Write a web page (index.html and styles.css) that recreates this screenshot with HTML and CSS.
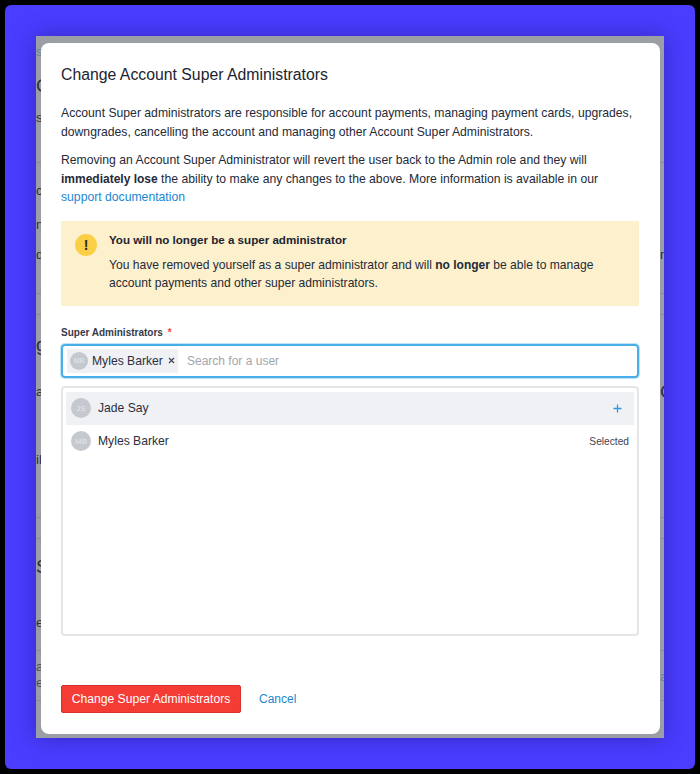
FILE: index.html
```html
<!DOCTYPE html>
<html lang="en">
<head>
<meta charset="utf-8">
<title>Change Account Super Administrators</title>
<link rel="stylesheet" href="styles.css">
</head>
<body>
<div class="frame">
  <div class="stage">
    <div class="backdrop" aria-hidden="true">
      <div></div>
      <div class="row link"><span>s</span></div>
      <div></div>
      <div class="row big"><span>C</span></div>
      <div></div>
      <div class="row"><span>s</span></div>
      <div class="line"></div>
      <div></div>
      <div class="row"><span>c</span></div>
      <div></div>
      <div class="row"><span>n</span></div>
      <div></div>
      <div class="row"><span>d</span><span>ng</span></div>
      <div class="line"></div>
      <div class="line"></div>
      <div></div>
      <div class="row big"><span>g</span></div>
      <div></div>
      <div class="row"><span>a</span><span class="big">C</span></div>
      <div></div>
      <div class="row"><span>il</span></div>
      <div class="line"></div>
      <div class="line"></div>
      <div></div>
      <div class="row big"><span>S</span></div>
      <div></div>
      <div class="row"><span>e</span></div>
      <div class="line"></div>
      <div></div>
      <div class="row double"><span>a<br>er</span><span class="link far">ar</span></div>
      <div class="line"></div>
    </div>

    <main class="modal">
      <h1 class="title">Change Account Super Administrators</h1>
      <p class="copy first">Account Super administrators are responsible for account payments, managing payment cards, upgrades, downgrades, cancelling the account and managing other Account Super Administrators.</p>
      <p class="copy second">Removing an Account Super Administrator will revert the user back to the Admin role and they will <strong>immediately lose</strong> the ability to make any changes to the above. More information is available in our <a class="anchor" href="#">support documentation</a></p>

      <section class="alert">
        <div class="alert-icon">!</div>
        <div class="alert-body">
          <h2 class="alert-title">You will no longer be a super administrator</h2>
          <p class="alert-text">You have removed yourself as a super administrator and will <strong>no longer</strong> be able to manage account payments and other super administrators.</p>
        </div>
      </section>

      <label class="label">Super Administrators <span class="req">*</span></label>
      <div class="input">
        <span class="chip">
          <span class="avatar small">MB</span>
          <span class="chip-name">Myles Barker</span>
          <svg class="chip-x" width="7" height="7" viewBox="0 0 7 7"><path d="M1 1l5 5M6 1L1 6" stroke="#3a3f4b" stroke-width="1.1" fill="none"/></svg>
        </span>
        <span class="placeholder">Search for a user</span>
      </div>

      <div class="list">
        <div class="option active">
          <span class="avatar">JS</span>
          <span class="option-name">Jade Say</span>
          <svg class="plus" width="9" height="9" viewBox="0 0 9 9"><path d="M4.5 0.5v8M0.5 4.5h8" stroke="#2f97dc" stroke-width="1.3" fill="none"/></svg>
        </div>
        <div class="option">
          <span class="avatar">MB</span>
          <span class="option-name">Myles Barker</span>
          <span class="selected">Selected</span>
        </div>
      </div>

      <div class="actions">
        <button class="danger" type="button">Change Super Administrators</button>
        <a class="anchor cancel" href="#">Cancel</a>
      </div>
    </main>
  </div>
</div>
</body>
</html>
```

FILE: styles.css
```css
* { box-sizing: border-box; }
html, body { margin: 0; height: 774px; background: #000; overflow: hidden; }
body { font-family: "Liberation Sans", Arial, sans-serif; color: #1f2533; }

.frame {
  height: 764px;
  margin: 5px;
  padding: 31px 31px 31px;
  background: #4a3dff;
  border-radius: 6px;
}

.stage {
  position: relative;
  height: 702px;
  padding: 7px 4px 4px 5px;
  background: #9c9ea6;
  box-shadow: 0 0 22px rgba(25, 15, 110, 0.42);
  overflow: hidden;
}

/* page dimmed behind the dialog, only its edges show */
.backdrop {
  position: absolute;
  inset: 0;
  display: grid;
  grid-template-rows: 8px 16px 18px 20px 12px 16px 37px 20px 16px 18px 16px 14px 16px 31px 21px 22px 16px 31px 16px 52px 16px 50px 21px 20px 16px 40px 16px 20px 8px 32px 10px;
  color: #2c303b;
  font-size: 13px;
}
.row {
  display: grid;
  grid-template-columns: 624px 1fr;
  line-height: 16px;
  white-space: nowrap;
}
.row.big, .big { font-size: 19px; }
.row.link, .link { color: #5d86a3; }
.double { color: #4c505b; }
.far { padding-top: 10px; }
.line { border-bottom: 1px solid #8d8f97; }

.modal {
  position: relative;
  height: 691px;
  padding: 22px 21px 0 20px;
  background: #fff;
  border-radius: 8px;
}

.title {
  margin: 0;
  font-size: 15.8px;
  line-height: 19px;
  font-weight: 400;
  color: #1c2331;
}

.copy {
  margin: 0;
  font-size: 12.2px;
  line-height: 18.5px;
  color: #242a38;
}
.first { margin-top: 20px; }
.second { margin-top: 10px; }
strong { font-weight: 700; font-size: 12px; }
.anchor { color: #1a87d0; text-decoration: none; }

.alert {
  display: flex;
  gap: 12px;
  height: 85px;
  margin-top: 14px;
  padding: 12px 14px;
  background: #fdf0cd;
}
.alert-icon {
  flex: none;
  width: 22px;
  height: 22px;
  margin-top: 1px;
  border-radius: 50%;
  background: #fbcf45;
  color: #2a2a2a;
  font-size: 14px;
  font-weight: 700;
  line-height: 22px;
  text-align: center;
}
.alert-title {
  margin: 0;
  font-size: 11.6px;
  line-height: 14px;
  font-weight: 700;
  color: #1c2331;
}
.alert-text {
  margin: 9px 0 0;
  font-size: 12.1px;
  line-height: 18px;
  color: #242a38;
}

.label {
  display: block;
  margin-top: 20px;
  font-size: 10px;
  line-height: 13px;
  font-weight: 700;
  color: #343a48;
}
.req { margin-left: 2px; color: #f0433a; }

.input {
  display: flex;
  align-items: center;
  height: 34px;
  margin-top: 5px;
  padding: 0 4px;
  border: 2px solid #49aee6;
  border-radius: 4px;
  box-shadow: 0 0 0 1px #bfe3f8;
}
.chip {
  display: flex;
  align-items: center;
  width: 111px;
  height: 24px;
  padding: 0 3px;
  background: #f0f1f5;
  white-space: nowrap;
}
.chip-name { margin-left: 4px; font-size: 12.15px; color: #2a3040; }
.chip-x { margin-left: 5px; }
.placeholder { margin-left: 9px; font-size: 12px; color: #a3a6ae; }

.avatar {
  display: flex;
  align-items: center;
  justify-content: center;
  flex: none;
  width: 20px;
  height: 20px;
  border-radius: 50%;
  background: #c5c8ce;
  color: #e4e6ea;
  font-size: 8px;
}
.avatar.small { width: 18px; height: 18px; font-size: 7px; }

.list {
  height: 250px;
  margin-top: 8px;
  padding: 4px 3px 3px;
  border: 2px solid #e4e6ea;
  border-radius: 4px;
}
.option {
  display: flex;
  align-items: center;
  height: 33px;
  padding: 0 5px 0 5px;
}
.option.active { background: #f0f1f5; }
.option-name { margin-left: 7px; font-size: 12.15px; color: #2a3040; }
.plus { margin-left: auto; margin-right: 7px; }
.selected { margin-left: auto; font-size: 10.2px; color: #3e4350; }

.actions {
  display: flex;
  align-items: center;
  gap: 18px;
  margin-top: 49px;
}
.danger {
  width: 180px;
  height: 28px;
  padding: 0;
  border: 1px solid #d9322b;
  border-radius: 2px;
  background: #f43c35;
  color: #fff;
  font-family: inherit;
  font-size: 12.15px;
}
.cancel { font-size: 12px; }
```
